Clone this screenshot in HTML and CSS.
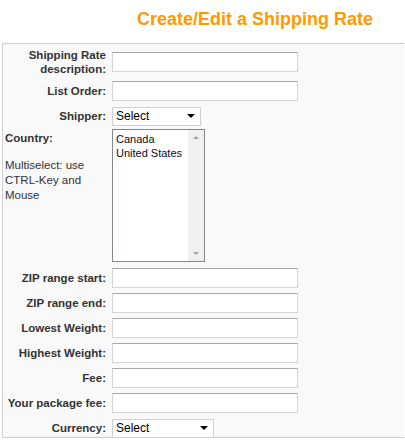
FILE: index.html
```html
<!DOCTYPE html>
<html lang="en">
<head>
    <meta charset="UTF-8">
    <title>Create/Edit a Shipping Rate</title>
    <link rel="stylesheet" href="styles.css">
</head>
<body>
    <h1 class="page-title">Create/Edit a Shipping Rate</h1>

    <form class="rate-form">
        <label class="field-label two-line" for="desc">Shipping Rate<br>description:</label>
        <input class="text-input" type="text" id="desc">

        <label class="field-label" for="order">List Order:</label>
        <input class="text-input" type="text" id="order">

        <label class="field-label" for="shipper">Shipper:</label>
        <span class="select-wrap shipper">
            <select id="shipper"><option>Select</option></select>
        </span>

        <div class="country-cell">
            <div class="country-label">Country:</div>
            <div class="country-note">Multiselect: use CTRL-Key and Mouse</div>
        </div>
        <div class="listbox">
            <div class="listbox-options">
                <div>Canada</div>
                <div>United States</div>
            </div>
            <div class="listbox-scroll">
                <span class="arrow-up"></span>
                <span class="arrow-down"></span>
            </div>
        </div>

        <label class="field-label" for="zipstart">ZIP range start:</label>
        <input class="text-input" type="text" id="zipstart">

        <label class="field-label" for="zipend">ZIP range end:</label>
        <input class="text-input" type="text" id="zipend">

        <label class="field-label" for="lowest">Lowest Weight:</label>
        <input class="text-input" type="text" id="lowest">

        <label class="field-label" for="highest">Highest Weight:</label>
        <input class="text-input" type="text" id="highest">

        <label class="field-label" for="fee">Fee:</label>
        <input class="text-input" type="text" id="fee">

        <label class="field-label" for="pkgfee">Your package fee:</label>
        <input class="text-input" type="text" id="pkgfee">

        <label class="field-label" for="currency">Currency:</label>
        <span class="select-wrap currency">
            <select id="currency"><option>Select</option></select>
        </span>
    </form>
</body>
</html>
```

FILE: styles.css
```css
body {
    margin: 0;
    font-family: "Liberation Sans", Arial, sans-serif;
    color: #333;
    background: #fff;
}

.page-title {
    margin: 8px 0 13px;
    padding-left: 137px;
    font-size: 18px;
    line-height: 22px;
    font-weight: bold;
    color: #ff9900;
}

.rate-form {
    display: grid;
    grid-template-columns: 101px auto;
    justify-content: start;
    align-items: center;
    column-gap: 6px;
    row-gap: 5px;
    margin: 0 0 0 2px;
    padding: 4px 0 0 2px;
    width: 402px;
    box-sizing: border-box;
    background: #f9f9f9;
    border: 1px solid #cfcfcf;
    border-right: none;
}

.field-label {
    font-size: 11.5px;
    font-weight: bold;
    line-height: 14px;
    text-align: right;
    color: #333;
}

.text-input {
    width: 186px;
    height: 20px;
    box-sizing: border-box;
    margin: 0;
    padding: 0 3px;
    border: 1px solid #d4d4d4;
    border-top-color: #a9a9a9;
    background: #fff;
    font-size: 12px;
}

.select-wrap {
    position: relative;
    display: block;
    height: 19px;
}

.select-wrap.shipper {
    width: 89px;
}

.select-wrap.currency {
    width: 102px;
}

.select-wrap select {
    appearance: none;
    -webkit-appearance: none;
    width: 100%;
    height: 100%;
    margin: 0;
    padding: 0 0 0 3px;
    border: 1px solid #d0d0d0;
    border-radius: 0;
    background: #fff;
    font-family: "Liberation Sans", Arial, sans-serif;
    font-size: 12px;
    color: #000;
}

.select-wrap::after {
    content: "";
    position: absolute;
    right: 6px;
    top: 8px;
    border-left: 4px solid transparent;
    border-right: 4px solid transparent;
    border-top: 4px solid #000;
    pointer-events: none;
}

.country-cell {
    align-self: start;
    margin-top: 1px;
}

.country-label {
    font-size: 11.5px;
    font-weight: bold;
    line-height: 14px;
}

.country-note {
    margin-top: 13px;
    padding-right: 10px;
    font-size: 11.5px;
    line-height: 15px;
    color: #333;
}

.listbox {
    display: flex;
    width: 93px;
    height: 133px;
    box-sizing: border-box;
    margin: -1px 0 1px;
    border: 1px solid #828790;
    background: #fff;
}

.listbox-options {
    flex: 1;
    padding: 2px 0 0 3px;
    font-size: 11px;
    line-height: 14px;
    color: #0a0a28;
}

.listbox-scroll {
    position: relative;
    width: 16px;
    background: #f0f0f0;
}

.arrow-up,
.arrow-down {
    position: absolute;
    left: 5px;
    border-left: 3px solid transparent;
    border-right: 3px solid transparent;
}

.arrow-up {
    top: 6px;
    border-bottom: 3px solid #a3a3a3;
}

.arrow-down {
    bottom: 6px;
    border-top: 3px solid #a3a3a3;
}
```
